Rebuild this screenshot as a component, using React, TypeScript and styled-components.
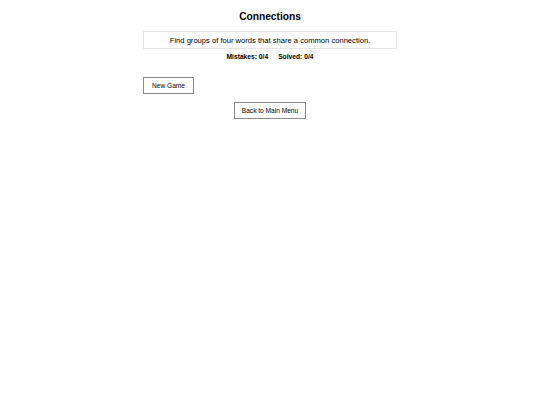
import React from "react";
import styled, { createGlobalStyle } from "styled-components";

const Global = createGlobalStyle`
  html, body { margin: 0; padding: 0; background: #ffffff; }
  body { font-family: "Liberation Sans", Arial, sans-serif; color: #000; }
`;

const Page = styled.div`
  display: flex;
  flex-direction: column;
  align-items: center;
  padding-top: 10px;
`;

const Container = styled.div`
  width: 254px;
  display: flex;
  flex-direction: column;
`;

const Title = styled.h1`
  margin: 0;
  font-size: 10.2px;
  line-height: 13px;
  font-weight: 700;
  text-align: center;
`;

const Info = styled.div`
  margin-top: 8px;
  border: 1px solid #e6e6e6;
  height: 16px;
  display: flex;
  align-items: center;
  justify-content: center;
  font-size: 7.6px;
`;

const Stats = styled.div`
  margin-top: 3px;
  display: flex;
  justify-content: center;
  gap: 10px;
  font-size: 6.7px;
  font-weight: 700;
  line-height: 9px;
`;

const Controls = styled.div`
  margin-top: 16px;
  display: flex;
`;

const Button = styled.button<{ $center?: boolean }>`
  box-sizing: border-box;
  height: 17px;
  padding: 0 ${(p) => (p.$center ? 7 : 8)}px;
  border: 1px solid #8a8a8a;
  background: #fff;
  font-family: "Liberation Sans", Arial, sans-serif;
  font-size: 6.6px;
  color: #000;
  align-self: ${(p) => (p.$center ? "center" : "flex-start")};
  cursor: pointer;
`;

const BackRow = styled.div`
  margin-top: 8px;
  display: flex;
  justify-content: center;
`;

export default function App() {
  return (
    <>
      <Global />
      <Page>
        <Container>
          <Title>Connections</Title>
          <Info>Find groups of four words that share a common connection.</Info>
          <Stats>
            <span>Mistakes: 0/4</span>
            <span>Solved: 0/4</span>
          </Stats>
          <Controls>
            <Button>New Game</Button>
          </Controls>
          <BackRow>
            <Button $center>Back to Main Menu</Button>
          </BackRow>
        </Container>
      </Page>
    </>
  );
}
